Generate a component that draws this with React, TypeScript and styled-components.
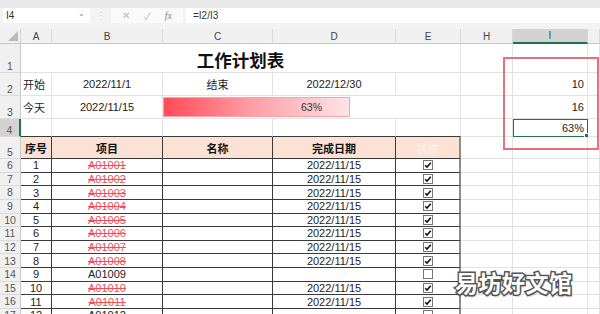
import React from 'react'
import styled, { createGlobalStyle, css } from 'styled-components'

const gridLine = '#e2e2e2'
const ink = '#3a3a3a'
const green = '#217346'

const GlobalStyle = createGlobalStyle`
  html, body {
    margin: 0;
    padding: 0;
    background: #fff;
  }
  body {
    font-family: 'Liberation Sans', 'Noto Sans CJK SC', sans-serif;
    font-size: 11px;
    color: #222;
    overflow: hidden;
  }
`

type Row = { no: number; item: string; done: boolean }

const rows: Row[] = Array.from({ length: 12 }, (_, i) => ({
  no: i + 1,
  item: `A010${String(i + 1).padStart(2, '0')}`,
  done: i !== 8 && i !== 11,
}))

const columns = ['A', 'B', 'C', 'D', 'E', 'H', 'I']

const watermark = '易坊好文馆'

function Check({ checked }: { checked: boolean }) {
  return (
    <svg width="10" height="10" viewBox="0 0 10 10">
      <rect x="0.5" y="0.5" width="9" height="9" fill="#fff" stroke="#777" />
      {checked && (
        <path d="M2.2 5.2 L4 7 L7.8 2.8" fill="none" stroke="#111" strokeWidth="1.6" />
      )}
    </svg>
  )
}

export default function App() {
  return (
    <Page>
      <GlobalStyle />
      <TopStrip />
      <FormulaBar>
        <NameBox>
          <span>I4</span>
          <Caret>⌄</Caret>
        </NameBox>
        <Grip>⋮</Grip>
        <FxBox>
          <FxIcon>✕</FxIcon>
          <FxIcon>✓</FxIcon>
          <FxLabel>fx</FxLabel>
        </FxBox>
        <FormulaInput>=I2/I3</FormulaInput>
      </FormulaBar>
      <Gap />
      <Sheet>
        <Corner>
          <svg width="10" height="10" viewBox="0 0 10 10">
            <path d="M10 0 L10 10 L0 10 Z" fill="#b9b9b9" />
          </svg>
        </Corner>
        {columns.map((c) => (
          <ColHead key={c} $active={c === 'I'}>
            {c}
          </ColHead>
        ))}
        <ColHead />

        {/* row 1 */}
        <RowHead>1</RowHead>
        <Cell $span={5} $align="center">
          <Title>工作计划表</Title>
        </Cell>
        <Cell />
        <Cell />
        <Cell />

        {/* row 2 */}
        <RowHead>2</RowHead>
        <Cell $align="left">开始</Cell>
        <Cell>2022/11/1</Cell>
        <Cell>结束</Cell>
        <Cell>2022/12/30</Cell>
        <Cell />
        <Cell />
        <Cell $align="right">10</Cell>
        <Cell />

        {/* row 3 */}
        <RowHead>3</RowHead>
        <Cell $align="left">今天</Cell>
        <Cell>2022/11/15</Cell>
        <Cell $span={3}>
          <DataBar style={{ width: '63%' }} />
          <BarText>63%</BarText>
        </Cell>
        <Cell />
        <Cell $align="right">16</Cell>
        <Cell />

        {/* row 4 */}
        <RowHead $active>4</RowHead>
        <Cell $under />
        <Cell $under />
        <Cell $under />
        <Cell $under />
        <Cell $under />
        <Cell />
        <Cell $align="right" $selected>
          63%
          <Handle />
        </Cell>
        <Cell />

        {/* row 5 */}
        <RowHead>5</RowHead>
        <Cell $box $head>序号</Cell>
        <Cell $box $head>项目</Cell>
        <Cell $box $head>名称</Cell>
        <Cell $box $head>完成日期</Cell>
        <Cell $box $head $edge>
          <Hidden>状态</Hidden>
        </Cell>
        <Cell />
        <Cell />
        <Cell />

        {rows.map((r) => (
          <React.Fragment key={r.no}>
            <RowHead>{r.no + 5}</RowHead>
            <Cell $box>{r.no}</Cell>
            <Cell $box $strike={r.done}>
              {r.item}
            </Cell>
            <Cell $box />
            <Cell $box>{r.done ? '2022/11/15' : ''}</Cell>
            <Cell $box $edge>
              <Check checked={r.done} />
            </Cell>
            <Cell />
            <Cell />
            <Cell />
          </React.Fragment>
        ))}
      </Sheet>
      <Highlight />
      <Watermark>
        <WatermarkOutline>{watermark}</WatermarkOutline>
        <WatermarkFill aria-hidden>{watermark}</WatermarkFill>
      </Watermark>
    </Page>
  )
}

const Page = styled.div`
  position: relative;
  width: 600px;
  height: 314px;
  overflow: hidden;
  background: #f3f3f3;
`

const TopStrip = styled.div`
  height: 8px;
  background: #e8e8e8;
`

const FormulaBar = styled.div`
  display: flex;
  height: 15px;
  padding-left: 3px;
  background: #f3f3f3;
`

const NameBox = styled.div`
  width: 87px;
  box-sizing: border-box;
  display: flex;
  align-items: center;
  justify-content: space-between;
  padding: 0 5px 0 3px;
  background: #fff;
  font-size: 10px;
  color: #333;
`

const Caret = styled.span`
  font-size: 8px;
  color: #888;
  line-height: 1;
  margin-top: -4px;
`

const Grip = styled.div`
  width: 21px;
  display: flex;
  align-items: center;
  justify-content: center;
  color: #c8c8c8;
  font-size: 10px;
`

const FxBox = styled.div`
  width: 72px;
  display: flex;
  align-items: center;
  justify-content: space-around;
  padding: 0 4px;
  box-sizing: border-box;
  background: #fafafa;
  color: #b8b8b8;
`

const FxIcon = styled.span`
  font-size: 10px;
`

const FxLabel = styled.span`
  font-family: 'Liberation Serif', serif;
  font-style: italic;
  font-size: 10px;
  color: #888;
`

const FormulaInput = styled.div`
  flex: 1;
  margin-left: 3px;
  padding-left: 7px;
  display: flex;
  align-items: center;
  background: #fff;
  font-size: 10px;
  color: #333;
`

const Gap = styled.div`
  height: 6px;
`

const Sheet = styled.div`
  display: grid;
  grid-template-columns: 21px 31px 111px 110px 123px 65px 52px 75px 1fr;
  grid-template-rows: 15px 29px 23px 23px 18px 22px repeat(12, 13.64px);
  background: #fff;
`

const Corner = styled.div`
  display: flex;
  align-items: flex-end;
  justify-content: flex-end;
  padding: 0 2px 2px 0;
  background: #f0f0f0;
  border-right: 1px solid #d4d4d4;
  border-bottom: 1px solid #c8c8c8;
`

const ColHead = styled.div<{ $active?: boolean }>`
  display: flex;
  align-items: center;
  justify-content: center;
  background: ${(p) => (p.$active ? '#d3d3d3' : '#f0f0f0')};
  color: ${(p) => (p.$active ? '#1e5b3a' : '#444')};
  font-size: 10px;
  border-right: 1px solid #d8d8d8;
  border-bottom: ${(p) => (p.$active ? `2px solid ${green}` : '1px solid #c8c8c8')};
`

const RowHead = styled.div<{ $active?: boolean }>`
  display: flex;
  align-items: flex-end;
  justify-content: center;
  padding-bottom: 1px;
  box-sizing: border-box;
  background: ${(p) => (p.$active ? '#d3d3d3' : '#f0f0f0')};
  color: #555;
  font-size: 10.5px;
  line-height: 1;
  border-right: ${(p) => (p.$active ? `2px solid ${green}` : '1px solid #c8c8c8')};
  border-bottom: 1px solid #dadada;
`

const Cell = styled.div<{
  $span?: number
  $align?: 'left' | 'center' | 'right'
  $box?: boolean
  $head?: boolean
  $strike?: boolean
  $under?: boolean
  $edge?: boolean
  $selected?: boolean
}>`
  position: relative;
  min-width: 0;
  display: flex;
  align-items: center;
  justify-content: ${(p) =>
    p.$align === 'left' ? 'flex-start' : p.$align === 'right' ? 'flex-end' : 'center'};
  padding: 0 ${(p) => (p.$align === 'right' ? 3 : 2)}px;
  box-sizing: border-box;
  white-space: nowrap;
  ${(p) => p.$span && `grid-column: span ${p.$span};`}
  border-right: 1px solid ${gridLine};
  border-bottom: 1px solid ${(p) => (p.$under ? ink : gridLine)};
  ${(p) =>
    p.$box &&
    css`
      border-right: 1px solid ${ink};
      border-bottom: 1px solid ${ink};
    `}
  ${(p) =>
    p.$edge &&
    css`
      border-right: 2px solid #8c8c8c;
    `}
  ${(p) =>
    p.$head &&
    css`
      background: #fbe2d5;
      font-weight: bold;
      font-family: 'Noto Sans CJK SC', sans-serif;
      font-size: 11px;
      color: #111;
    `}
  ${(p) =>
    p.$strike &&
    css`
      color: #f0505c;
      text-decoration: line-through;
    `}
  ${(p) =>
    p.$selected &&
    css`
      outline: 1.5px solid ${green};
      outline-offset: -1px;
    `}
`

const Title = styled.span`
  font-family: 'Noto Sans CJK SC', sans-serif;
  font-weight: bold;
  font-size: 17.5px;
  color: #111;
  margin-top: 2px;
`

const DataBar = styled.div`
  position: absolute;
  left: 0;
  top: 1px;
  bottom: 1px;
  box-sizing: border-box;
  border: 1px solid #f6a3ab;
  background: linear-gradient(90deg, #ff4b57 0%, #ff9aa3 45%, #ffe4e7 100%);
`

const BarText = styled.span`
  position: relative;
  font-size: 10.5px;
  color: #333;
`

const Hidden = styled.span`
  font-family: 'Noto Sans CJK SC', sans-serif;
  font-weight: normal;
  color: #fff;
  opacity: 0.55;
`

const Handle = styled.span`
  position: absolute;
  right: -2px;
  bottom: -2px;
  width: 3px;
  height: 3px;
  background: ${green};
  border: 1px solid #fff;
`

const Highlight = styled.div`
  position: absolute;
  left: 503px;
  top: 57px;
  width: 96px;
  height: 93px;
  box-sizing: border-box;
  border: 2px solid #e8707d;
  pointer-events: none;
`

const Watermark = styled.div`
  position: absolute;
  left: 455px;
  top: 266px;
  font-family: 'Noto Sans CJK SC', sans-serif;
  font-weight: bold;
  font-size: 23px;
  letter-spacing: 0.5px;
  line-height: 32px;
  white-space: nowrap;
`

const WatermarkOutline = styled.span`
  display: block;
  color: #555;
  -webkit-text-stroke: 3px #555;
  text-shadow: 1px 2px 2px rgba(0, 0, 0, 0.3);
`

const WatermarkFill = styled.span`
  position: absolute;
  left: 0;
  top: 0;
  color: #fff;
`
